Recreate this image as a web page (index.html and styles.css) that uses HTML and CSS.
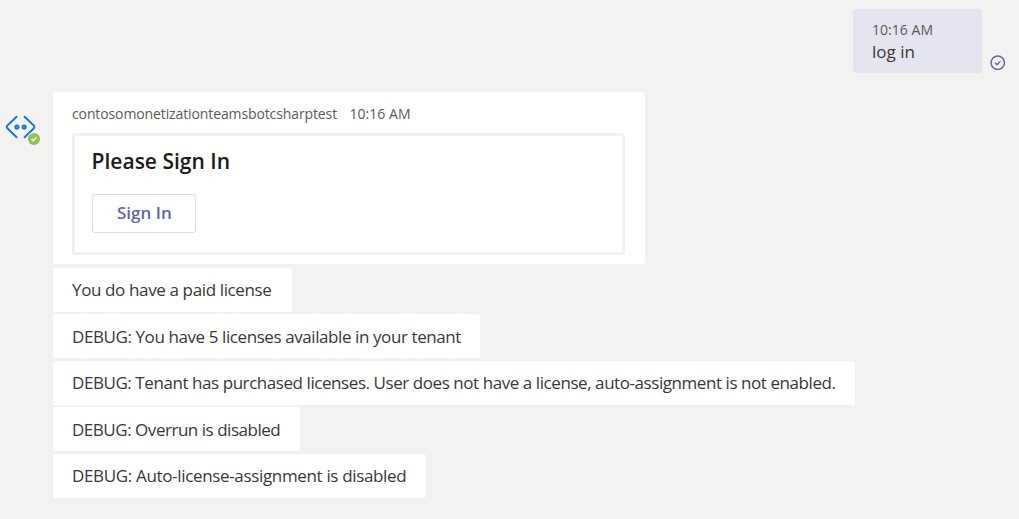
FILE: index.html
```
<!DOCTYPE html>
<html lang="en">
<head>
<meta charset="utf-8">
<title>Chat</title>
<link rel="stylesheet" href="styles.css">
</head>
<body>
<main class="chat">
  <section class="outgoing">
    <div class="sent">
      <time class="time">10:16 AM</time>
      <p class="sent-text">log in</p>
    </div>
    <svg class="receipt" viewBox="0 0 16 16" aria-label="Sent">
      <circle cx="8" cy="8" r="6.9" fill="none" stroke="#6264a7" stroke-width="1.5"/>
      <path d="M5.2 8.1l2 1.9 3.6-3.7" fill="none" stroke="#6264a7" stroke-width="1.4"/>
    </svg>
  </section>
  <section class="incoming">
    <div class="avatar">
      <svg class="bot" viewBox="0 0 32 26" aria-label="Bot">
        <g fill="none" stroke="#1177d1" stroke-width="1.9" stroke-linecap="round" stroke-linejoin="round">
          <path d="M11.6 2.7L2.3 11.6Q1.2 13 2.3 14.2L11.6 23.3"/>
          <path d="M19.6 2.7L28.9 11.6Q30 13 28.9 14.2L19.6 23.3"/>
        </g>
        <g fill="#3f92dc" stroke="#1177d1" stroke-width="1.5">
          <circle cx="11.9" cy="13" r="1.8"/>
          <circle cx="19.1" cy="13" r="1.8"/>
        </g>
      </svg>
      <svg class="presence" viewBox="0 0 14 14" aria-label="Available">
        <circle cx="7" cy="7" r="7" fill="#f3f2f1"/>
        <circle cx="7" cy="7" r="6.1" fill="#92c353"/>
        <path d="M4.6 7.1l1.7 1.6 3.1-3.1" fill="none" stroke="#fff" stroke-width="1.4"/>
      </svg>
    </div>
    <div class="messages">
      <article class="bubble bubble-card">
        <header class="meta"><span class="sender">contosomonetizationteamsbotcsharptest</span><time class="time">10:16 AM</time></header>
        <div class="card">
          <h2 class="card-title">Please Sign In</h2>
          <button class="sign-in" type="button">Sign In</button>
        </div>
      </article>
      <p class="bubble license">You do have a paid license</p>
      <p class="bubble available">DEBUG: You have 5 licenses available in your tenant</p>
      <p class="bubble tenant">DEBUG: Tenant has purchased licenses. User does not have a license, auto-assignment is not enabled.</p>
      <p class="bubble overrun">DEBUG: Overrun is disabled</p>
      <p class="bubble assignment">DEBUG: Auto-license-assignment is disabled</p>
    </div>
  </section>
</main>
</body>
</html>
```
FILE: styles.css
```
* { box-sizing: border-box; }
body {
  margin: 0;
  background: #f3f2f1;
  color: #383736;
  font: 17px/22px "Open Sans", "Noto Sans", sans-serif;
}
p, h2 { margin: 0; }
.chat { height: 519px; padding-top: 8.6px; overflow: hidden; }

.outgoing { display: flex; justify-content: flex-end; align-items: flex-end; padding-right: 14px; }
.sent {
  width: 129.5px;
  height: 64px;
  margin-right: 7.5px;
  padding: 10.4px 19.5px 0;
  border-radius: 3px;
  background: #e5e5f1;
}
.time { display: block; font-size: 14px; line-height: 21px; letter-spacing: 0.03px; color: #5c5a58; }
.sent-text { line-height: 23px; }
.receipt { width: 15.5px; height: 15.5px; margin-bottom: 2.4px; }

.incoming { display: flex; margin-top: 19.8px; }
.avatar { position: relative; width: 52.5px; flex: none; padding: 21.5px 0 0 5px; }
.bot { display: block; width: 32px; height: 26px; }
.presence { position: absolute; left: 27px; top: 40px; width: 14px; height: 14px; }

.messages { display: flex; flex-direction: column; align-items: flex-start; gap: 2.5px; }
.bubble {
  height: 44px;
  padding: 11.4px 0 0 19.5px;
  border-radius: 0 3px 3px 0;
  background: #fff;
  white-space: nowrap;
}
.bubble-card { width: 592px; height: 171.8px; margin-bottom: 1.2px; padding-top: 10.4px; border-radius: 3px 3px 3px 0; }
.license { width: 239px; letter-spacing: -0.37px; }
.available { width: 427.5px; letter-spacing: -0.412px; }
.tenant { width: 802.5px; letter-spacing: -0.434px; }
.overrun { width: 247.5px; letter-spacing: -0.47px; }
.assignment { width: 373.5px; letter-spacing: -0.34px; border-bottom-left-radius: 3px; }

.meta { display: flex; gap: 12.5px; }
.sender { font-size: 14px; line-height: 21px; letter-spacing: -0.114px; color: #5c5a58; }
.card {
  width: 553px;
  height: 122px;
  margin-top: 9px;
  padding: 11.3px 16.6px 0;
  border: 3px solid #f3f2f1;
  border-radius: 3px;
}
.card-title { font-size: 21px; line-height: 28px; font-weight: 560; color: #1c1b1a; }
.sign-in {
  display: block;
  width: 104.5px;
  height: 39px;
  margin-top: 18.7px;
  padding: 0 0 0 1px;
  border: 1px solid #dcdcf4;
  border-radius: 3px;
  background: #fff;
  color: #6264a7;
  font: 560 17px/22px "Open Sans", "Noto Sans", sans-serif;
}
```
